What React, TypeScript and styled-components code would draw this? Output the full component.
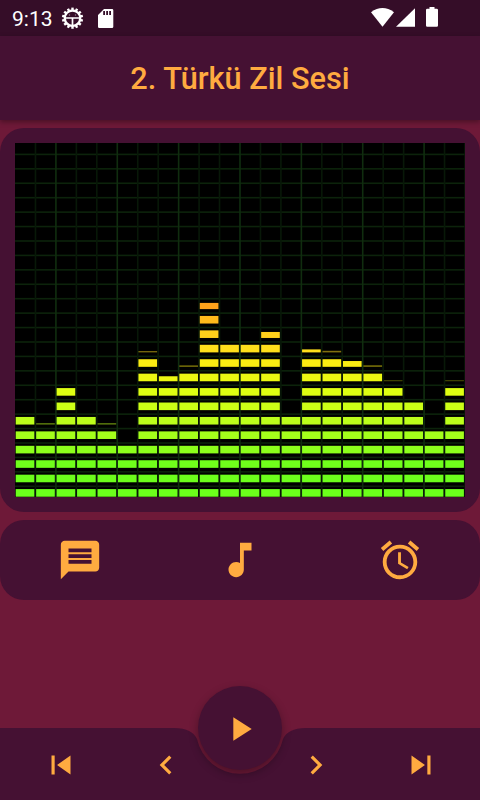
import React from 'react';
import styled, { createGlobalStyle } from 'styled-components';
import {
  MdAlarm,
  MdChevronLeft,
  MdChevronRight,
  MdMessage,
  MdMusicNote,
  MdPlayArrow,
  MdSkipNext,
  MdSkipPrevious,
} from 'react-icons/md';

const colors = {
  page: '#6e1938',
  panel: '#451133',
  status: '#350d28',
  accent: '#ffab40',
};

const GlobalStyle = createGlobalStyle`
  * { box-sizing: border-box; }
  body {
    margin: 0;
    background: ${colors.page};
    font-family: Roboto, sans-serif;
  }
`;

const Screen = styled.div`
  width: 480px;
  height: 800px;
  display: flex;
  flex-direction: column;
  overflow: hidden;
  background: ${colors.page};
`;

const StatusBar = styled.div`
  height: 36px;
  flex: none;
  display: flex;
  align-items: center;
  background: ${colors.status};
  color: #fff;
`;

const Clock = styled.span`
  width: 49px;
  padding: 2px 0 0 12px;
  margin-right: 12px;
  font-size: 21px;
  line-height: 36px;
  white-space: nowrap;
`;

const StatusIcons = styled.svg<{ $push?: boolean }>`
  display: block;
  flex: none;
  margin-left: ${(p) => (p.$push ? 'auto' : '0')};
  margin-right: ${(p) => (p.$push ? '40px' : '0')};
`;

const TitleBar = styled.header`
  height: 84px;
  flex: none;
  display: flex;
  align-items: center;
  justify-content: center;
  background: ${colors.panel};
  box-shadow: 0 2px 5px rgba(0, 0, 0, 0.35);
`;

const Title = styled.h1`
  margin: 0;
  padding-top: 1px;
  font-size: 30.7px;
  font-weight: 500;
  line-height: 36px;
  color: ${colors.accent};
  white-space: nowrap;
`;

const Card = styled.section<{ $height: number }>`
  height: ${(p) => p.$height}px;
  flex: none;
  display: flex;
  align-items: center;
  margin-top: 8px;
  border-radius: 24px;
  background: ${colors.panel};
`;

const VisualizerCard = styled(Card)`
  padding: 15px;
  align-items: flex-start;
`;

const ActionButton = styled.button`
  flex: 1;
  height: 100%;
  display: flex;
  align-items: center;
  justify-content: center;
  padding: 0;
  border: 0;
  background: none;
  color: ${colors.accent};
  font-size: 46px;
`;

const BottomBar = styled.nav`
  position: relative;
  height: 72px;
  flex: none;
  display: flex;
  margin-top: auto;
`;

const BarShape = styled.svg`
  position: absolute;
  left: 0;
  top: 0;
`;

const NavButton = styled.button<{ $width: number }>`
  position: relative;
  width: ${(p) => p.$width}px;
  height: 72px;
  display: flex;
  align-items: center;
  justify-content: center;
  padding: 1px 0 0 1px;
  border: 0;
  background: none;
  color: ${colors.accent};
  font-size: 38px;
`;

const NotchGap = styled.div`
  width: 60px;
`;

const PlayButton = styled.button`
  position: absolute;
  left: 198px;
  top: -42px;
  width: 84px;
  height: 84px;
  display: flex;
  align-items: center;
  justify-content: center;
  padding: 2px 0 0;
  border: 0;
  border-radius: 50%;
  background: ${colors.panel};
  color: ${colors.accent};
  font-size: 40px;
  box-shadow: 0 4px 10px rgba(0, 0, 0, 0.32);
`;

const WIDTH = 450;
const HEIGHT = 354;
const COLUMN = WIDTH / 22;
const ROW = 14.43;
const SEGMENT = 7.6;

// Fill per segment, from the floor up.
const segmentColors = [
  '#6cff1b', '#6cff1b', '#70ff1b', '#8cff1b', '#a4ff1b', '#bcff1b', '#ccff16',
  '#deff12', '#eaf812', '#fbec12', '#ffdf1b', '#ffd01b', '#ffba1b', '#ffa21b',
];

// Level of each band: full segments, and the height and opacity of the peak above.
const bands: { full: number; peak?: number; fade?: number }[] = [
  { full: 6 },
  { full: 5, peak: 1.4, fade: 0.5 },
  { full: 8 },
  { full: 6 },
  { full: 5, peak: 1.4, fade: 0.5 },
  { full: 4 },
  { full: 10, peak: 1.4, fade: 0.45 },
  { full: 8, peak: 5 },
  { full: 9, peak: 1.4, fade: 0.5 },
  { full: 13, peak: 6.2 },
  { full: 11 },
  { full: 11 },
  { full: 11, peak: 6 },
  { full: 6 },
  { full: 10, peak: 3 },
  { full: 10, peak: 1.6, fade: 0.5 },
  { full: 9, peak: 5.8 },
  { full: 9, peak: 1.5, fade: 0.5 },
  { full: 8, peak: 1.2, fade: 0.28 },
  { full: 7 },
  { full: 5 },
  { full: 8, peak: 1.2, fade: 0.28 },
];

function Equalizer() {
  const rows = Array.from({ length: 24 }, (_, i) => 11.4 + i * ROW);
  return (
    <svg width={WIDTH} height={HEIGHT} viewBox={`0 0 ${WIDTH} ${HEIGHT}`}>
      <rect width={WIDTH} height={HEIGHT} fill="#000" />
      {rows.map((y) => (
        <rect key={y} x={0} y={y - 0.8} width={WIDTH} height={1.6} fill="#0c230b" />
      ))}
      {bands.map((_, i) => (
        <rect key={i} x={(i + 1) * COLUMN - 0.8} y={0} width={1.6} height={HEIGHT}
          fill={i % 3 === 1 ? '#102d0f' : '#081808'} />
      ))}
      {bands.map((band, i) => {
        const x = i * COLUMN + 0.7;
        const w = COLUMN - 1.8;
        const bottom = (n: number) => 353.7 - n * ROW;
        return (
          <g key={i}>
            {segmentColors.slice(0, band.full).map((fill, n) => (
              <rect key={n} x={x} y={bottom(n) - SEGMENT} width={w} height={SEGMENT} fill={fill} />
            ))}
            {band.peak && (
              <rect x={x} y={bottom(band.full) - band.peak} width={w} height={band.peak}
                fill={segmentColors[band.full]} opacity={band.fade ?? 1} />
            )}
          </g>
        );
      })}
    </svg>
  );
}

function GearIcon() {
  const spokes = Array.from({ length: 14 }, (_, i) => (i * 360) / 14);
  return (
    <g stroke="#fff" fill="none">
      <circle cx="11.5" cy="12.2" r="7.7" strokeWidth="2.3" />
      {spokes.map((a) => (
        <path key={a} d="M11.5 1.6v3" strokeWidth="2.4" transform={`rotate(${a} 11.5 12.2)`} />
      ))}
      <path d="M4 12h15M11.5 12v7" strokeWidth="1.7" />
      <path d="M8.5 8.6v1M14.5 8.6v1" strokeWidth="1.2" opacity=".6" />
    </g>
  );
}

export default function App() {
  return (
    <>
      <GlobalStyle />
      <Screen>
        <StatusBar>
          <Clock>9:13</Clock>
          <StatusIcons width="54" height="24" viewBox="0 0 54 24">
            <GearIcon />
            <path fill="#fff" fillRule="evenodd" d="M43 3h8q1.3 0 1.3 1.3v16.4q0 1.3-1.3 1.3H38.300q-1.3 0-1.3-1.3V9zM42.2 5v4h1.8V5zM45.2 5v4h1.8V5zM48.2 5v4h1.8V5z" />
          </StatusIcons>
          <StatusIcons $push width="70" height="24" viewBox="0 0 70 24">
            <path fill="#fff" d="M1 6.2Q12.5-2.2 24 6.2L12.5 20.8z" />
            <path fill="#fff" d="M45 2.2V20.7H26z" />
            <path fill="#fff" d="M59.5 1h5v1.7h2.2q1.3 0 1.3 1.3v15.4q0 1.3-1.3 1.3h-9.4q-1.3 0-1.3-1.3V4q0-1.3 1.3-1.3h2.2z" />
          </StatusIcons>
        </StatusBar>
        <TitleBar>
          <Title>2. Türkü Zil Sesi</Title>
        </TitleBar>
        <VisualizerCard $height={384}>
          <Equalizer />
        </VisualizerCard>
        <Card $height={80}>
          <ActionButton aria-label="Messages"><MdMessage /></ActionButton>
          <ActionButton aria-label="Ringtone"><MdMusicNote /></ActionButton>
          <ActionButton aria-label="Alarm"><MdAlarm /></ActionButton>
        </Card>
        <BottomBar>
          <BarShape width="480" height="72" viewBox="0 0 480 72">
            <path fill={colors.panel} d="M0 0H174C187 0 193.500 4 197 11A44 44 0 0 0 283 11C286.500 4 293 0 306 0H480V72H0z" />
          </BarShape>
          <NavButton $width={120} aria-label="First"><MdSkipPrevious /></NavButton>
          <NavButton $width={90} aria-label="Previous"><MdChevronLeft /></NavButton>
          <NotchGap />
          <NavButton $width={90} aria-label="Next"><MdChevronRight /></NavButton>
          <NavButton $width={120} aria-label="Last"><MdSkipNext /></NavButton>
          <PlayButton aria-label="Play"><MdPlayArrow /></PlayButton>
        </BottomBar>
      </Screen>
    </>
  );
}
